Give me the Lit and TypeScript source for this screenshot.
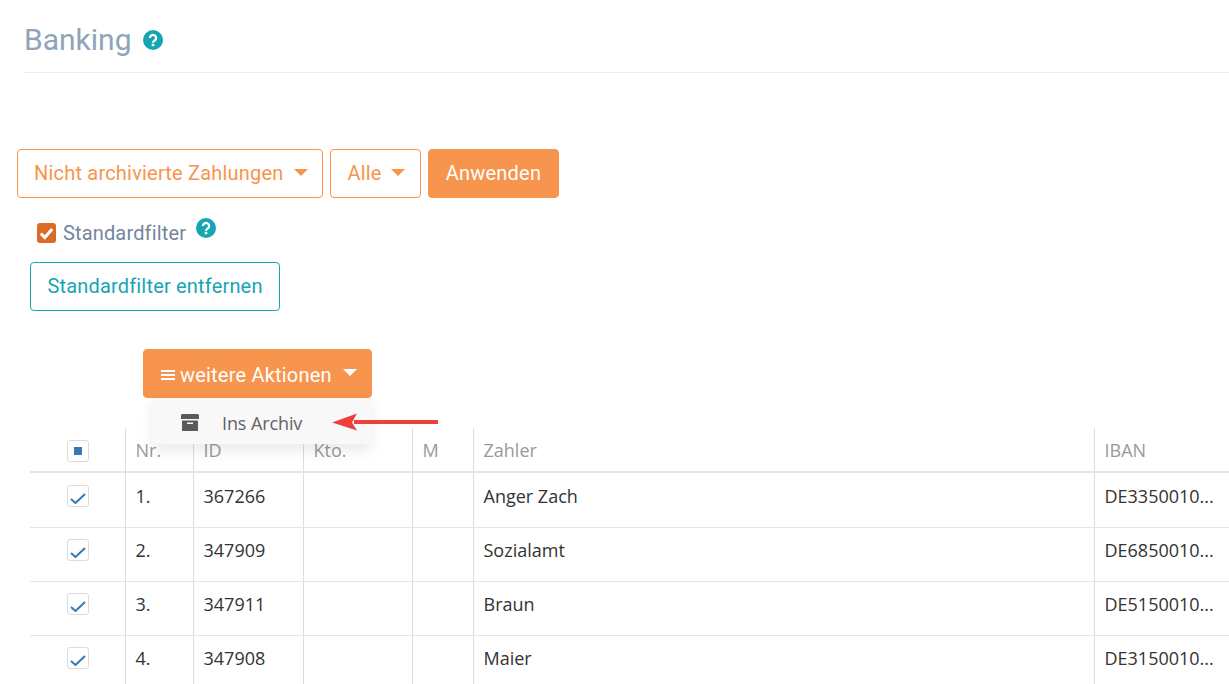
import { LitElement, html, css, svg } from "lit";
import { customElement } from "lit/decorators.js";

const help = (cls: string) => html`<svg class=${cls} viewBox="0 0 20 20" aria-hidden="true">
  <circle cx="10" cy="10" r="10" fill="#17a5b3"></circle>
  <path d="M6.900 8a3.100 3 0 1 1 5 2.300c-1.100.8-1.900 1.100-1.900 2.400" fill="none" stroke="#fff" stroke-width="2.300"></path>
  <rect x="8.700" y="13.800" width="2.600" height="2.400" fill="#fff"></rect>
</svg>`;

const rows = [
  ["1.", "367266", "Anger Zach", "DE3350010..."],
  ["2.", "347909", "Sozialamt", "DE6850010..."],
  ["3.", "347911", "Braun", "DE5150010..."],
  ["4.", "347908", "Maier", "DE3150010..."],
];

@customElement("app-root")
export class AppRoot extends LitElement {
  static styles = css`
    :host { display: block; position: relative; width: 1229px; height: 684px; overflow: hidden; background: #fff; font-family: Roboto, sans-serif; }
    .head { display: flex; align-items: center; gap: 11px; margin-left: 24px; height: 72px; border-bottom: 1px solid #eeeeee; box-sizing: content-box; }
    h1 { margin: 0; font: 400 30px/36px Roboto, sans-serif; color: #8fa3bb; position: relative; top: 4px; }
    .h-help { width: 20px; height: 20px; position: relative; top: 4px; }
    .filters { display: flex; gap: 7px; margin: 76px 0 0 17px; }
    button { box-sizing: border-box; height: 49px; border-radius: 4px; font: 400 20px/1 Roboto, sans-serif; letter-spacing: 0.2px; background: #fff; padding: 0 16px 2px; display: inline-flex; align-items: center; white-space: nowrap; }
    .outline { border: 1px solid #f7944d; color: #f7944d; }
    .solid { border: 1px solid #f7944d; background: #f7944d; color: #fff; }
    .teal { border: 1px solid #17a5b3; color: #17a5b3; }
    .caret { width: 0; height: 0; border-left: 7px solid transparent; border-right: 7px solid transparent; border-top: 7px solid currentColor; margin-left: 10px; position: relative; top: 0; }
    .f1 { width: 306px; } .f2 { width: 91px; padding-left: 16.500px; } .f2 .caret { margin-left: 9.500px; } .f3 { width: 131px; justify-content: center; padding: 0 0 2px; }
    .check { display: flex; align-items: center; margin: 20px 0 0 37px; height: 30px; color: #75859f; font-size: 20px; letter-spacing: 0.15px; }
    .box { width: 19px; height: 20px; border-radius: 3px; background: #dc6a28; display: flex; align-items: center; justify-content: center; margin-right: 7px; }
    .box svg { width: 17px; height: 17px; }
    .s-help { width: 20px; height: 20px; margin-left: 10px; position: relative; top: -5px; }
    .remove { margin: 14px 0 0 30px; width: 250px; justify-content: center; padding: 0 0 2px; display: flex; letter-spacing: 0.18px; }
    .actions { position: relative; margin: 38px 0 0 143px; width: 229px; }
    .act { width: 229px; padding: 2px 0 0 17px; }
    .burger { width: 14px; height: 11px; margin-right: 5px; position: relative; top: 1px; }
    .act .caret { margin-left: 11px; top: -2px; }
    .menu { position: absolute; z-index: 2; top: 49px; left: 10px; width: 218px; height: 46px; background: #f8f8f8; box-shadow: 0 6px 14px rgba(0,0,0,.09); display: flex; align-items: center; color: #5f6368; font: 400 18px "Open Sans", sans-serif; }
    .menu svg { width: 18px; height: 18px; margin: 0 23px 0 28px; position: relative; top: 2px; }
    .menu span { position: relative; top: 2px; letter-spacing: -0.1px; }
    .arrow { position: absolute; z-index: 3; left: 189px; top: 64px; width: 106px; height: 18px; }
    table { border-collapse: collapse; table-layout: fixed; width: 1199px; margin: 30px 0 0 30px; font: 400 18px "Open Sans", sans-serif; color: #333; }
    th { height: 43px; padding: 0 10px; text-align: left; font-weight: 400; color: #999; border-bottom: 2px solid #e5e5e5; border-left: 1px solid #ddd; }
    td { height: 54px; padding: 0 10px 9px; box-sizing: border-box; border-bottom: 1px solid #e5e5e5; border-left: 1px solid #ddd; white-space: nowrap; }
    tbody tr:first-child td { height: 55px; padding-bottom: 8px; }
    th:first-child, td:first-child { border-left: 0; text-align: center; padding: 0 0 0 2px; }
    td:first-child { padding-bottom: 12px; }
    tbody tr:first-child td:first-child { padding-bottom: 10px; }
    .cb { display: inline-flex; width: 22px; height: 22px; box-sizing: border-box; border: 1px solid #dcdcdc; border-radius: 3px; background: #fff; align-items: center; justify-content: center; vertical-align: middle; }
    .cb i { display: block; width: 8px; height: 8px; background: #337ab7; }
    .cb svg { width: 16px; height: 12px; position: relative; top: 2px; }
  `;

  render() {
    const tick = svg`<path d="M1 7l4.500 4L15 2" fill="none" stroke="#337ab7" stroke-width="2"/>`;
    return html`
      <div class="head"><h1>Banking</h1>${help("h-help")}</div>
      <div class="filters">
        <button class="outline f1">Nicht archivierte Zahlungen<span class="caret"></span></button>
        <button class="outline f2">Alle<span class="caret"></span></button>
        <button class="solid f3">Anwenden</button>
      </div>
      <div class="check">
        <span class="box"><svg viewBox="0 0 15 15"><path d="M2.500 7.500l3.500 3.500 6.500-7.500" fill="none" stroke="#fff" stroke-width="2.800"/></svg></span>
        Standardfilter${help("s-help")}
      </div>
      <button class="teal remove">Standardfilter entfernen</button>
      <div class="actions">
        <button class="solid act">
          <svg class="burger" viewBox="0 0 14 11" shape-rendering="crispEdges"><path d="M0 0h14v2H0zM0 4h14v2H0zM0 8h14v2H0z" fill="#fff"></path></svg>weitere Aktionen<span class="caret"></span>
        </button>
        <div class="menu">
          <svg viewBox="0 0 18 18"><path d="M1 0h16l1 1v4H0V1zM1 6.500h16V17H1z" fill="#5a5a5a"></path><path d="M6 8.500h6V10H6z" fill="#f8f8f8"></path></svg>
          <span>Ins Archiv</span>
        </div>
        <svg class="arrow" viewBox="0 0 106 18"><path d="M106 7v4H22V7z" fill="#ef3e3e"></path><path d="M0 9.500L25 .5 20 9.500l5 8z" fill="#ef3e3e"></path></svg>
      </div>
      <table>
        <colgroup><col style="width:95px"><col style="width:68px"><col style="width:110px"><col style="width:109px"><col style="width:61px"><col style="width:621px"><col style="width:135px"></colgroup>
        <thead><tr>
          <th><span class="cb"><i></i></span></th><th>Nr.</th><th>ID</th><th>Kto.</th><th>M</th><th>Zahler</th><th>IBAN</th>
        </tr></thead>
        <tbody>
          ${rows.map((r) => html`<tr>
            <td><span class="cb"><svg viewBox="0 0 16 12">${tick}</svg></span></td>
            <td>${r[0]}</td><td>${r[1]}</td><td></td><td></td><td>${r[2]}</td><td>${r[3]}</td>
          </tr>`)}
        </tbody>
      </table>
    `;
  }
}
